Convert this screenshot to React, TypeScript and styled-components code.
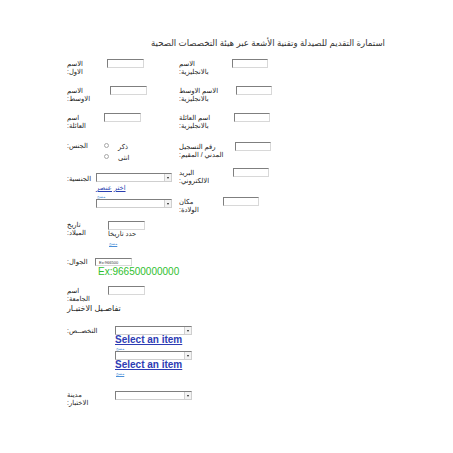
import React from 'react';
import styled, { createGlobalStyle } from 'styled-components';

const GlobalStyle = createGlobalStyle`
  html, body {
    margin: 0;
    padding: 0;
    background: #fff;
  }
  body {
    font-family: 'Liberation Sans', 'DejaVu Sans', sans-serif;
    color: #222;
  }
`;

const Page = styled.div`
  width: 453px;
  height: 453px;
  padding-top: 38px;
  box-sizing: border-box;
  overflow: hidden;
`;

const Title = styled.div`
  direction: rtl;
  text-align: right;
  padding-right: 68px;
  font-size: 8.6px;
  line-height: 10px;
  color: #333;
`;

const Form = styled.div`
  display: flex;
  align-items: flex-start;
  padding-left: 67px;
  margin-top: 11px;
`;

const Column = styled.div<{ $w?: number }>`
  display: flex;
  flex-direction: column;
  align-items: flex-start;
  width: ${(p) => (p.$w ? `${p.$w}px` : 'auto')};
`;

const Row = styled.div<{ $top?: number }>`
  display: flex;
  align-items: flex-start;
  margin-top: ${(p) => p.$top ?? 0}px;
`;

const Label = styled.div<{ $w: number; $pad?: number }>`
  width: ${(p) => p.$w}px;
  flex-shrink: 0;
  direction: rtl;
  text-align: left;
  font-size: 6.8px;
  line-height: 8px;
  padding-top: ${(p) => p.$pad ?? 0}px;
  color: #222;
  white-space: nowrap;
`;

const Field = styled.div`
  display: flex;
  flex-direction: column;
  align-items: flex-start;
`;

const TextInput = styled.div<{ $w?: number; $h?: number }>`
  width: ${(p) => p.$w ?? 37}px;
  height: ${(p) => p.$h ?? 9}px;
  box-sizing: border-box;
  border: 1px solid;
  border-color: #7f7f7f #d8d8d8 #d8d8d8 #7f7f7f;
  background: #fff;
  display: flex;
  align-items: center;
  padding-left: 3px;
  font-size: 4px;
  color: #333;
  overflow: hidden;
`;

const SelectBox = styled.div<{ $w?: number }>`
  width: ${(p) => p.$w ?? 76}px;
  height: 9px;
  box-sizing: border-box;
  border: 1px solid;
  border-color: #7f7f7f #cfcfcf #cfcfcf #7f7f7f;
  background: #fff;
  display: flex;
  justify-content: flex-end;
  align-items: stretch;
`;

const Arrow = styled.div`
  width: 6px;
  border-left: 1px solid #d0d0d0;
  background: #f3f3f3;
  display: flex;
  align-items: center;
  justify-content: center;

  &::after {
    content: '';
    border-left: 1.5px solid transparent;
    border-right: 1.5px solid transparent;
    border-top: 2px solid #222;
  }
`;

const ArLink = styled.a`
  direction: rtl;
  font-size: 6.8px;
  line-height: 8px;
  color: #2b3fb0;
  text-decoration: underline;
  margin-top: 2px;
`;

const ItemLink = styled.a`
  font-size: 10px;
  line-height: 9px;
  font-weight: bold;
  color: #2d3cb4;
  text-decoration: underline;
`;

const TinyLink = styled.a<{ $top?: number }>`
  direction: rtl;
  font-size: 4px;
  line-height: 5px;
  color: #4a8fd8;
  text-decoration: underline;
  margin-top: ${(p) => p.$top ?? 0}px;
  margin-left: 1px;
`;

const Note = styled.div<{ $top?: number; $size?: number }>`
  direction: rtl;
  text-align: left;
  font-size: ${(p) => p.$size ?? 6.8}px;
  line-height: ${(p) => (p.$size ?? 6.8) > 7 ? 10 : 8}px;
  color: #222;
  margin-top: ${(p) => p.$top ?? 0}px;
`;

const Hint = styled.div`
  font-size: 10px;
  line-height: 10px;
  color: #2fc02f;
  margin-top: 1px;
  margin-left: 3px;
`;

const RadioGroup = styled.div`
  display: flex;
  flex-direction: column;
  gap: 2px;
`;

const RadioRow = styled.div`
  display: flex;
  align-items: center;
  gap: 9px;
  height: 9px;
`;

const Radio = styled.span`
  width: 3px;
  height: 3px;
  border-radius: 50%;
  border: 1px solid #a8a8a8;
  background: #fff;
`;

const RadioText = styled.span`
  direction: rtl;
  font-size: 6.8px;
  line-height: 8px;
  margin-top: 2px;
`;

const FieldRow: React.FC<{
  label: React.ReactNode;
  w: number;
  top?: number;
  inputW?: number;
}> = ({ label, w, top, inputW }) => (
  <Row $top={top}>
    <Label $w={w} $pad={1}>
      {label}
    </Label>
    <TextInput $w={inputW} />
  </Row>
);

const Select: React.FC<{ w?: number }> = ({ w }) => (
  <SelectBox $w={w}>
    <Arrow />
  </SelectBox>
);

export default function App() {
  return (
    <Page>
      <GlobalStyle />
      <Title>استمارة التقديم للصيدلة وتقنية الأشعة عبر هيئة التخصصات الصحية</Title>

      <Form>
        <Column $w={112}>
          <FieldRow w={40} label={<>الاسم<br />الاول:</>} />
          <FieldRow w={43} top={10} label={<>الاسم<br />الاوسط:</>} />
          <FieldRow w={37} top={10} label={<>اسم<br />العائلة:</>} />

          <Row $top={11}>
            <Label $w={37} $pad={1}>الجنس:</Label>
            <RadioGroup>
              <RadioRow>
                <Radio />
                <RadioText>ذكر</RadioText>
              </RadioRow>
              <RadioRow>
                <Radio />
                <RadioText>انثى</RadioText>
              </RadioRow>
            </RadioGroup>
          </Row>

          <Row $top={12}>
            <Label $w={29} $pad={2}>الجنسية:</Label>
            <Field>
              <Select />
              <ArLink href="#">اختر عنصر</ArLink>
              <TinyLink href="#" $top={2}>مسح</TinyLink>
              <Select />
            </Field>
          </Row>

          <Row $top={13}>
            <Label $w={41} $pad={0}>تاريخ<br />الميلاد:</Label>
            <Field>
              <TextInput />
              <Note>حدد تاريخا</Note>
              <TinyLink href="#" $top={3}>مسح</TinyLink>
            </Field>
          </Row>

          <Row $top={12}>
            <Label $w={28} $pad={0}>الجوال:</Label>
            <Field>
              <TextInput $h={8}>Ex:966500</TextInput>
              <Hint>Ex:966500000000</Hint>
            </Field>
          </Row>

          <FieldRow w={41} top={9} label={<>اسم<br />الجامعة:</>} />

          <Note $top={1} $size={8}>تفاصـيل الاختبـار</Note>

          <Row $top={12}>
            <Label $w={48} $pad={1}>التخصــص:</Label>
            <Field>
              <Select w={77} />
              <ItemLink href="#">Select an item</ItemLink>
              <TinyLink href="#" $top={2}>مسح</TinyLink>
              <Select w={77} />
              <ItemLink href="#">Select an item</ItemLink>
              <TinyLink href="#" $top={2}>مسح</TinyLink>
            </Field>
          </Row>

          <Row $top={15}>
            <Label $w={48} $pad={0}>مدينة<br />الاختبار:</Label>
            <Select w={77} />
          </Row>
        </Column>

        <Column>
          <FieldRow w={53} inputW={36} label={<>الاسم<br />بالانجليزية:</>} />
          <FieldRow w={57} inputW={36} top={10} label={<>الاسم الاوسط<br />بالانجليزية:</>} />
          <FieldRow w={55} inputW={36} top={10} label={<>اسم العائلة<br />بالانجليزية:</>} />
          <FieldRow w={56} inputW={36} top={12} label={<>رقم التسجيل<br />المدني / المقيم:</>} />
          <FieldRow w={54} inputW={36} top={9} label={<>البريد<br />الالكتروني:</>} />
          <FieldRow w={44} inputW={36} top={12} label={<>مكان<br />الولادة:</>} />
        </Column>
      </Form>
    </Page>
  );
}
